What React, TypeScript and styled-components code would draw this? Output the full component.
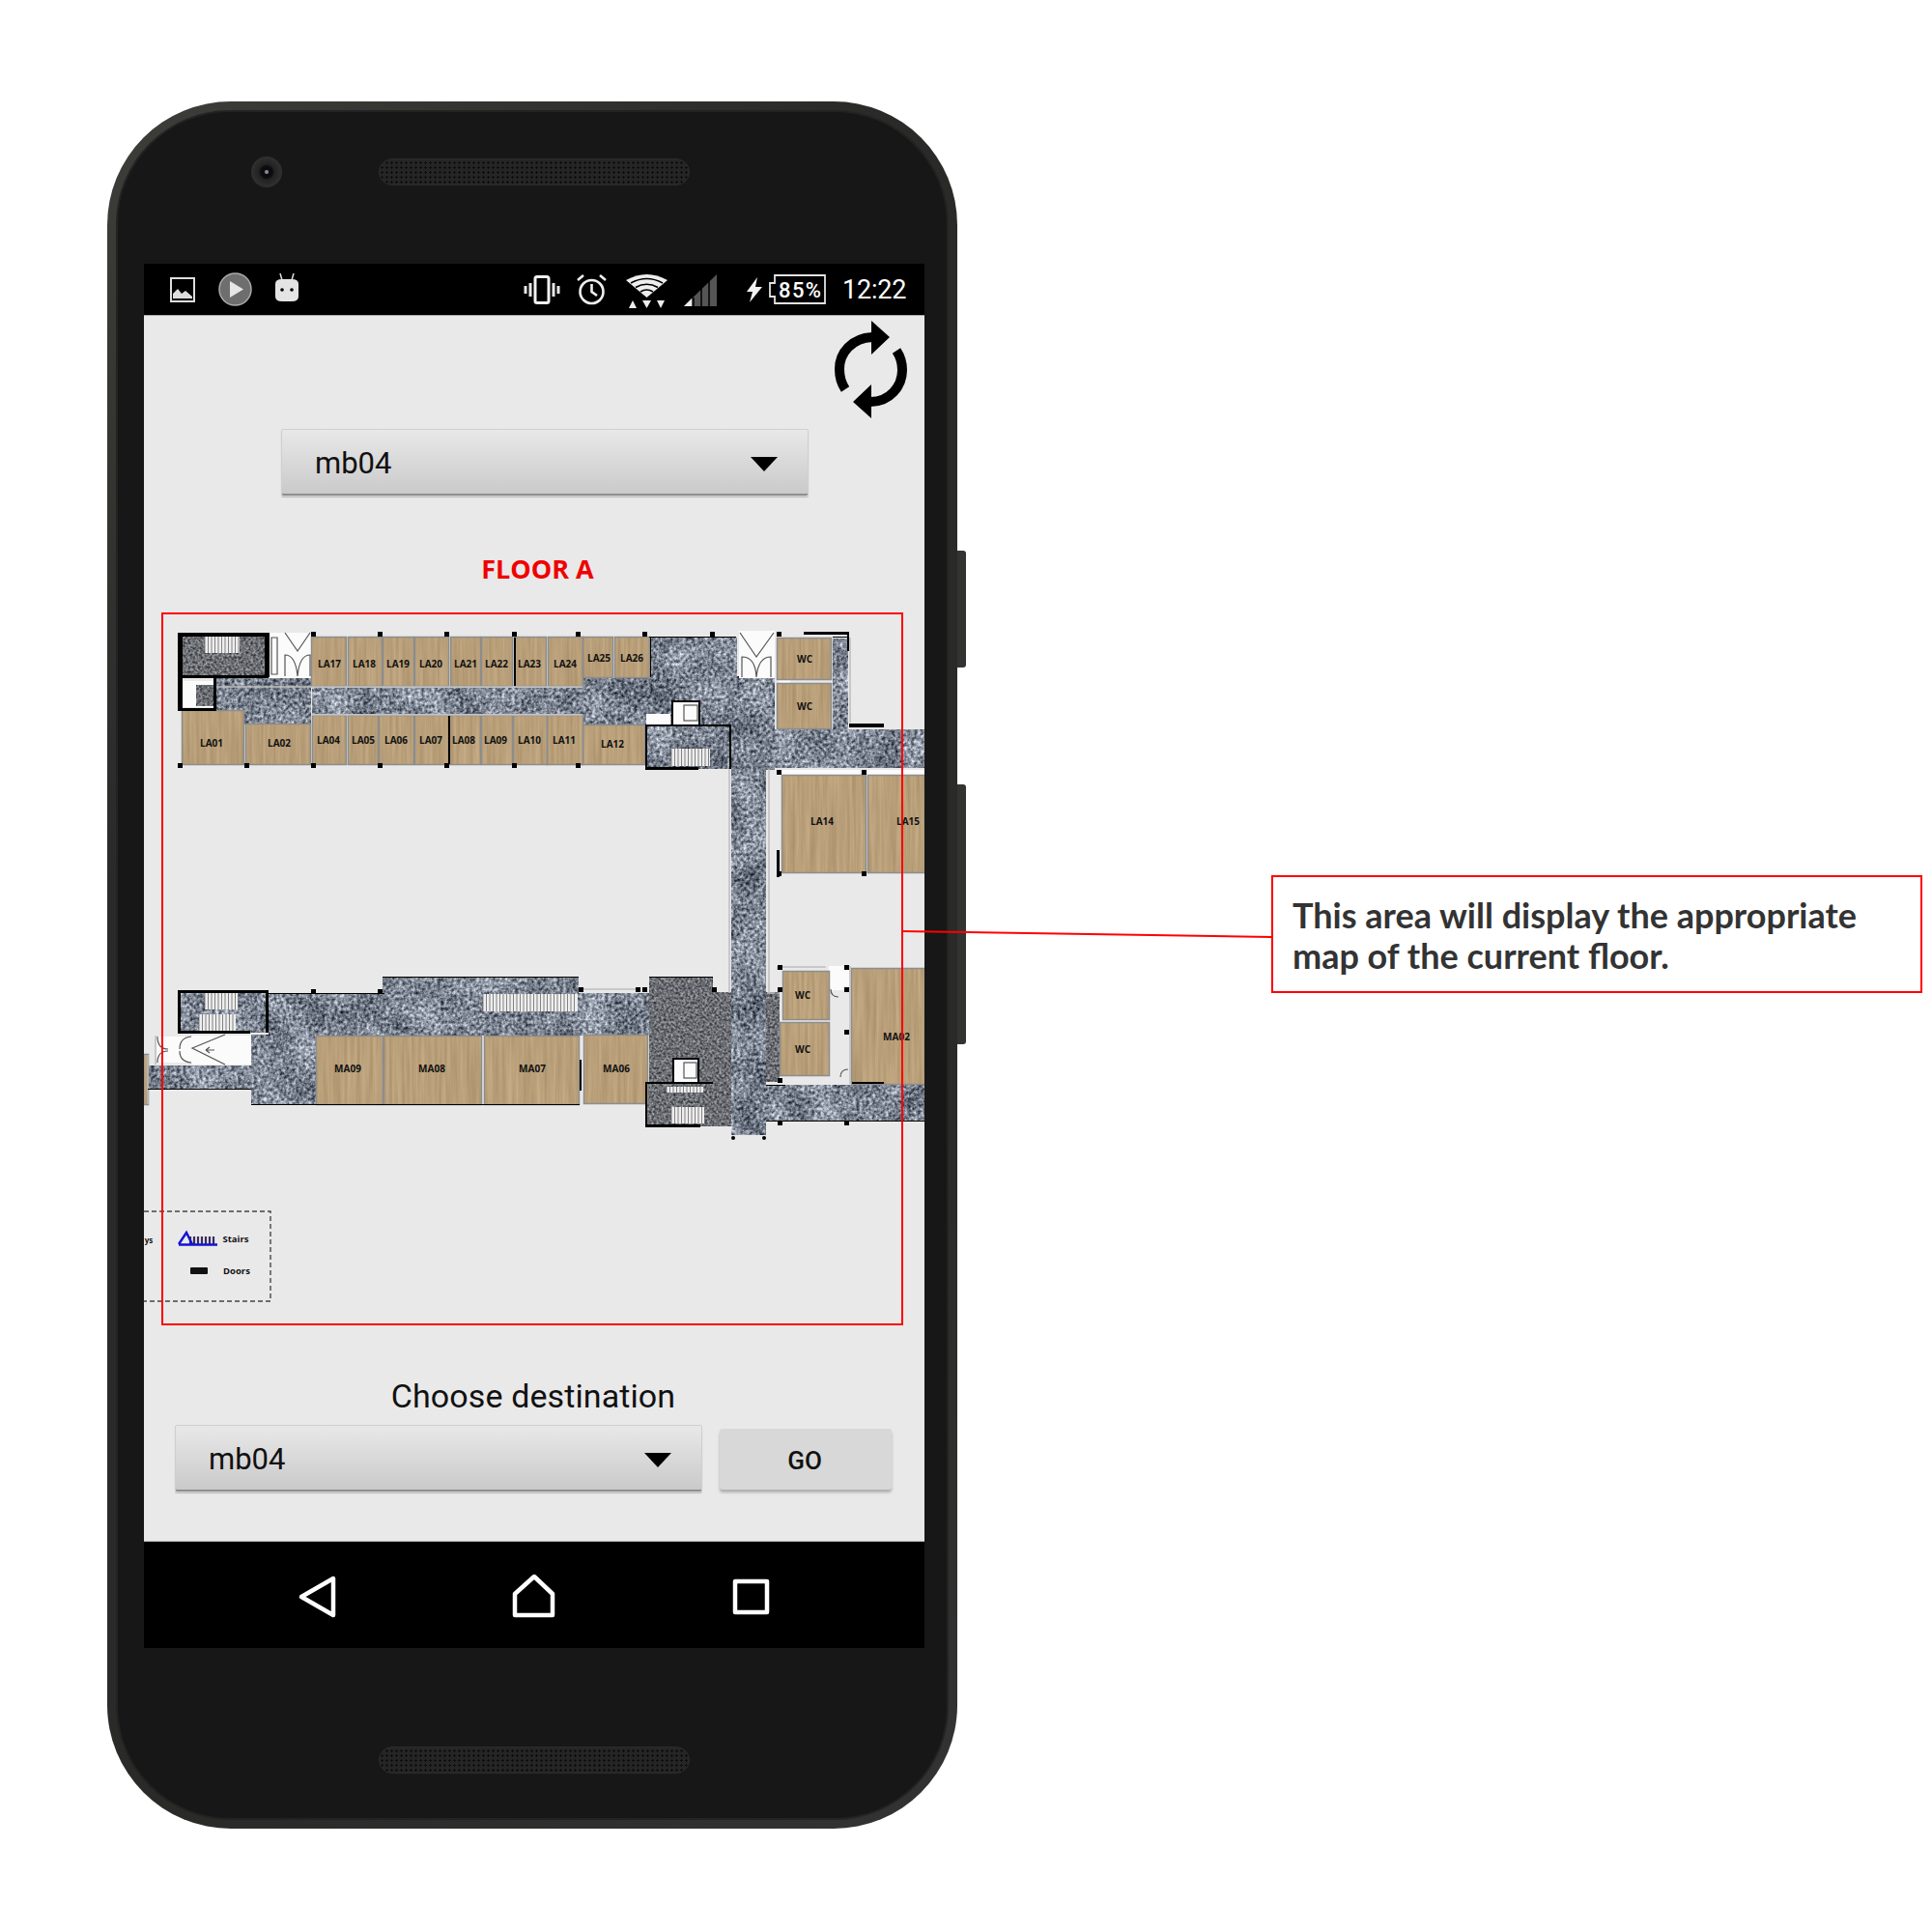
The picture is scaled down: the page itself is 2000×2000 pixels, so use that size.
import React from 'react';
import styled, { createGlobalStyle } from 'styled-components';

const GlobalStyle = createGlobalStyle`
	html, body {
		margin: 0;
		padding: 0;
		background: #fff;
	}
`;

const Page = styled.div`
	position: relative;
	display: flex;
	align-items: flex-start;
	width: 2000px;
	height: 2000px;
	overflow: hidden;
	font-family: Roboto, 'Liberation Sans', sans-serif;
`;

const Phone = styled.div`
	position: relative;
	flex: none;
	display: flex;
	flex-direction: column;
	box-sizing: border-box;
	width: 880px;
	height: 1788px;
	margin: 105px 0 0 111px;
	padding: 0 34px 0 38px;
	border-radius: 128px;
	background: linear-gradient(135deg, #3d3d3a, #2a2a28 30%, #2a2a28 70%, #333);

	&::before {
		content: '';
		position: absolute;
		inset: 11px;
		border-radius: 116px;
		background: #171717;
		box-shadow: 0 0 0 2px #232323;
	}
`;

const SideKey = styled.div<{ $top: number; $height: number }>`
	position: absolute;
	right: -9px;
	top: ${p => p.$top}px;
	width: 9px;
	height: ${p => p.$height}px;
	border-radius: 0 3px 3px 0;
	background: #333331;
`;

const TopBezel = styled.div`
	position: relative;
	display: flex;
	align-items: center;
	box-sizing: border-box;
	height: 168px;
	padding: 57px 0 79px 111px;
`;

const Camera = styled.div`
	width: 32px;
	height: 32px;
	border-radius: 50%;
	background: radial-gradient(circle, #8a8a8a 0 1.5px, #0c0c10 2.5px 6px, #222 8px, #2f2f2e 15px);
`;

const Speaker = styled.div<{ $left: number }>`
	position: relative;
	box-sizing: border-box;
	width: 322px;
	height: 28px;
	margin-left: ${p => p.$left}px;
	border-radius: 14px;
	border: 1px solid #2c2c2c;
	background: radial-gradient(circle, #0e0e0e 1px, transparent 1.4px) 0 1px / 5px 5px, #252525;
`;

const Screen = styled.div`
	position: relative;
	display: flex;
	flex-direction: column;
	width: 808px;
	height: 1433px;
	overflow: hidden;
	background: #e9e9e9;
`;

const StatusBar = styled.div`
	display: flex;
	align-items: center;
	flex: none;
	height: 53px;
	padding-left: 27px;
	background: #000;
	border-bottom: 1px solid #aaa;
`;

const StatusIcon = styled.svg<{ $left: number; $nudge?: number }>`
	display: block;
	flex: none;
	margin-left: ${p => p.$left}px;
	margin-top: ${p => p.$nudge ?? 0}px;
`;

const Clock = styled.span`
	margin-left: 17px;
	color: #fff;
	font-size: 27px;
	line-height: 30px;
	letter-spacing: -0.2px;
`;

const Content = styled.div`
	flex: 1;
	display: flex;
	flex-direction: column;
`;

const RefreshRow = styled.div`
	display: flex;
	justify-content: flex-end;
	height: 117px;
	padding: 5px 16px 0 0;
	box-sizing: border-box;
`;

const Spinner = styled.div<{ $left: number }>`
	display: flex;
	flex: none;
	align-items: center;
	justify-content: space-between;
	box-sizing: border-box;
	width: 546px;
	height: 70px;
	margin-left: ${p => p.$left}px;
	padding: 0 31px 0 34px;
	border: 1px solid #cfcfcf;
	border-radius: 2px;
	background: linear-gradient(#e8e8e8, #c9c9c9);
	box-shadow: inset 0 -2px 0 #8f8f8f, 0 1px 1px #bbb;
	color: #111;
	font-size: 31px;
`;

const Caret = styled.div`
	width: 0;
	height: 0;
	margin-top: 2px;
	border-left: 14px solid transparent;
	border-right: 14px solid transparent;
	border-top: 15px solid #000;
`;

const FloorTitle = styled.div`
	margin-top: 57px;
	height: 36px;
	padding-left: 7px;
	color: #f00000;
	font-family: 'Open Sans', sans-serif;
	font-size: 27px;
	font-weight: 700;
	line-height: 36px;
	text-align: center;
`;

const MapArea = styled.div`
	position: relative;
	height: 806px;
`;

const MapSvg = styled.svg`
	display: block;
`;

const MapFrame = styled.div`
	position: absolute;
	left: 18px;
	top: 27px;
	box-sizing: border-box;
	width: 768px;
	height: 738px;
	border: 2px solid #f00;
`;

const RoomLabel = styled.text<{ $size?: number }>`
	font-family: 'Open Sans', sans-serif;
	font-size: ${p => p.$size ?? 10}px;
	font-weight: 700;
	fill: #111;
	text-anchor: middle;
	dominant-baseline: central;
`;

const DestTitle = styled.div`
	margin-top: 12px;
	height: 40px;
	padding-right: 2px;
	color: #111;
	font-size: 34px;
	letter-spacing: 0.1px;
	line-height: 40px;
	text-align: center;
`;

const DestRow = styled.div`
	display: flex;
	align-items: center;
	margin-top: 10px;
`;

const GoButton = styled.button`
	width: 178px;
	height: 63px;
	margin-left: 18px;
	padding: 3px 2px 0 0;
	border: 0;
	border-radius: 3px;
	background: #d7d8d7;
	box-shadow: 0 3px 3px rgba(0, 0, 0, 0.25);
	color: #111;
	font-family: Roboto, sans-serif;
	font-size: 26px;
	font-weight: 500;
`;

const NavBar = styled.div`
	position: relative;
	flex: none;
	height: 111px;
	background: #000;
	border-top: 1px solid #bbb;
	box-sizing: border-box;
`;

const NavIcons = styled.svg`
	display: block;
`;

const BottomBezel = styled.div`
	position: relative;
	padding: 102px 0 0 243px;
`;

const Callout = styled.div`
	flex: none;
	box-sizing: border-box;
	width: 674px;
	height: 122px;
	margin: 906px 0 0 325px;
	padding: 18px 0 0 20px;
	border: 2px solid #f00;
	color: #333;
	font-family: Lato, sans-serif;
	font-size: 36px;
	font-weight: 700;
	line-height: 42px;
`;

const Connector = styled.svg`
	position: absolute;
	left: 0;
	top: 0;
`;

type Room = [string, number, number, number, number, number, number];

const rooms: Room[] = [
	['LA01', 189, 736, 63, 55, 219, 769],
	['LA02', 255, 750, 66, 41, 289, 769],
	['LA17', 323, 660, 35, 50, 341, 687],
	['LA18', 361, 660, 34, 50, 377, 687],
	['LA19', 397, 660, 31, 50, 412, 687],
	['LA20', 430, 660, 34, 50, 446, 687],
	['LA21', 467, 660, 30, 50, 482, 687],
	['LA22', 499, 660, 31, 50, 514, 687],
	['LA23', 533, 660, 32, 50, 548, 687],
	['LA24', 568, 660, 35, 50, 585, 687],
	['LA25', 604, 660, 30, 41, 620, 681],
	['LA26', 637, 660, 35, 41, 654, 681],
	['LA04', 324, 741, 34, 50, 340, 766],
	['LA05', 361, 741, 30, 50, 376, 766],
	['LA06', 393, 741, 35, 50, 410, 766],
	['LA07', 430, 741, 34, 50, 446, 766],
	['LA08', 466, 741, 31, 50, 480, 766],
	['LA09', 499, 741, 31, 50, 513, 766],
	['LA10', 532, 741, 34, 50, 548, 766],
	['LA11', 567, 741, 36, 50, 584, 766],
	['LA12', 604, 751, 63, 40, 634, 770],
	['WC', 805, 661, 55, 42, 833, 682],
	['WC', 805, 708, 55, 46, 833, 731],
	['LA14', 810, 803, 86, 100, 851, 850],
	['LA15', 899, 803, 58, 100, 940, 850],
	['MA09', 328, 1073, 68, 70, 360, 1106],
	['MA08', 398, 1073, 100, 70, 447, 1106],
	['MA07', 502, 1073, 97, 70, 551, 1106],
	['MA06', 605, 1072, 65, 70, 638, 1106],
	['WC', 811, 1006, 47, 49, 831, 1030],
	['WC', 808, 1059, 50, 54, 831, 1086],
	['MA02', 882, 1003, 75, 119, 928, 1073],
	['', 149, 1092, 4, 51, 0, 0],
];

// [x, y, w, h]
const stone = [
	[323, 712, 280, 27],
	[223, 702, 99, 48],
	[603, 702, 160, 48],
	[673, 660, 90, 45],
	[757, 700, 36, 475],
	[763, 702, 39, 95],
	[802, 755, 155, 40],
	[862, 661, 16, 94],
	[668, 751, 89, 45],
	[278, 1029, 120, 43],
	[396, 1012, 203, 60],
	[599, 1028, 73, 44],
	[260, 1071, 68, 72],
	[153, 1103, 107, 24],
	[793, 1123, 164, 37],
	[184, 1025, 94, 44],
];

const darkStone = [
	[184, 655, 94, 46],
	[672, 1011, 66, 110],
	[735, 1027, 72, 93],
	[668, 1120, 89, 46],
];

const pillars = [
	[322, 654], [391, 654], [460, 654], [530, 654], [596, 654], [665, 654], [735, 654], [804, 654],
	[184, 790], [253, 790], [322, 790], [391, 790], [460, 790], [530, 790], [596, 790],
	[804, 797], [892, 797], [804, 902], [892, 902],
	[805, 999], [874, 999], [805, 1022], [874, 1022], [874, 1066], [805, 1116], [805, 1160], [874, 1160],
	[599, 1022], [658, 1022], [665, 1022], [737, 1022],
	[322, 1024], [391, 1024],
];

const walls = [
	[184, 655, 94, 4], [184, 655, 5, 80], [274, 655, 5, 46], [184, 699, 94, 3], [184, 733, 39, 3],
	[221, 702, 3, 34], [532, 660, 2, 50], [464, 741, 2, 50],
	[832, 654, 47, 3], [877, 654, 2, 20], [879, 749, 36, 4],
	[668, 750, 89, 2], [668, 751, 2, 45], [755, 750, 2, 46], [668, 794, 55, 3],
	[804, 880, 3, 28],
	[184, 1025, 94, 3], [184, 1025, 3, 44], [275, 1025, 3, 44], [184, 1067, 75, 3],
	[668, 1120, 70, 2], [668, 1120, 2, 46], [668, 1164, 57, 3], [600, 1097, 2, 32],
	[696, 1095, 28, 2], [696, 1095, 2, 25], [722, 1095, 2, 25],
	[695, 725, 30, 2], [695, 725, 2, 25], [723, 725, 2, 25],
	[882, 1120, 33, 2],
	[153, 1127, 107, 1], [260, 1143, 340, 1], [793, 1160, 164, 1], [793, 1123, 20, 1],
	[396, 1011, 203, 1], [672, 1011, 66, 1], [278, 1028, 120, 1],
	[672, 659, 90, 1], [673, 659, 1, 42], [862, 659, 16, 1],
];

const white = [
	[189, 705, 33, 27],
	[208, 736, 14, 14],
	[695, 727, 30, 23],
	[669, 739, 25, 11],
	[765, 653, 37, 49],
	[806, 704, 12, 14],
	[279, 655, 43, 47],
	[696, 1097, 28, 23],
	[199, 1072, 61, 30],
	[162, 1073, 37, 27],
	[858, 1000, 22, 25],
	[805, 797, 85, 6],
	[892, 797, 65, 6],
];

// thin grey outlines that run along the outer walls
const outlines = [
	'M755 796 V1028 M796 796 V1028',
	'M880 660 V748',
	'M223 711 H603 M323 740 H603',
	'M855 1001 H805 V1004 M880 1000 V1122',
	'M802 1028 H794 M600 1024 H658',
	'M153 1092 V1143 M161 1072 V1102',
];

function Stairs({ x, y, w, h }: { x: number; y: number; w: number; h: number }) {
	const treads = [];
	for (let i = x; i < x + w; i += 3.5) {
		treads.push(<line key={i} x1={i} y1={y} x2={i} y2={y + h} stroke="#666" strokeWidth={0.8} />);
	}
	return (
		<g>
			<rect x={x} y={y} width={w} height={h} fill="#eee" />
			{treads}
		</g>
	);
}

function FloorPlan() {
	return (
		<MapSvg width={808} height={806} viewBox="149 607 808 806">
			<defs>
				<filter id="stone" x="0" y="0" width="100%" height="100%" colorInterpolationFilters="sRGB">
					<feTurbulence type="fractalNoise" baseFrequency="0.3" numOctaves={3} seed={4} />
					<feColorMatrix type="matrix" values="1 0 0 0 0  1 0 0 0 0  1 0 0 0 0  0 0 0 0 1" result="fine" />
					<feTurbulence type="fractalNoise" baseFrequency="0.03" numOctaves={2} seed={9} />
					<feColorMatrix type="matrix" values="1 0 0 0 0  1 0 0 0 0  1 0 0 0 0  0 0 0 0 1" result="blot" />
					<feComposite in="fine" in2="blot" operator="arithmetic" k1={0} k2={0.85} k3={0.35} k4={-0.1} />
					<feColorMatrix type="matrix" values="1.2 0 0 0 -0.11  1.2 0 0 0 -0.08  1.2 0 0 0 -0.03  0 0 0 0 1" />
					<feComposite in2="SourceAlpha" operator="in" />
				</filter>
				<filter id="stoneDark" x="0" y="0" width="100%" height="100%" colorInterpolationFilters="sRGB">
					<feTurbulence type="fractalNoise" baseFrequency="0.4" numOctaves={2} seed={7} />
					<feColorMatrix type="matrix" values="0.8 0 0 0 0.02  0.8 0 0 0 0.03  0.8 0 0 0 0.05  0 0 0 0 1" />
					<feComposite in2="SourceAlpha" operator="in" />
				</filter>
				<filter id="wood" x="0" y="0" width="100%" height="100%" colorInterpolationFilters="sRGB">
					<feTurbulence type="fractalNoise" baseFrequency="0.3 0.012" numOctaves={3} seed={3} />
					<feColorMatrix type="matrix" values="0.15 0 0 0 0.65  0.15 0 0 0 0.55  0.15 0 0 0 0.4  0 0 0 0 1" />
					<feComposite in2="SourceAlpha" operator="in" />
				</filter>
			</defs>

			<g filter="url(#stoneDark)">
				{darkStone.map(([x, y, w, h]) => (
					<rect key={`${x}-${y}`} x={x} y={y} width={w} height={h} />
				))}
			</g>
			<g filter="url(#stone)">
				{stone.map(([x, y, w, h]) => (
					<rect key={`${x}-${y}`} x={x} y={y} width={w} height={h} />
				))}
			</g>
			{white.map(([x, y, w, h]) => (
				<rect key={`${x}-${y}`} x={x} y={y} width={w} height={h} fill="#fbfbfb" />
			))}
			{/* lift car floor, sits on the white shaft */}
			<rect x={203} y={709} width={18} height={22} filter="url(#stoneDark)" />

			<g filter="url(#wood)">
				{rooms.map(([, x, y, w, h]) => (
					<rect key={`${x}-${y}`} x={x} y={y} width={w} height={h} />
				))}
			</g>
			{rooms.map(([, x, y, w, h]) => (
				<rect
					key={`${x}-${y}`}
					x={x - 0.5}
					y={y - 0.5}
					width={w + 1}
					height={h + 1}
					fill="none"
					stroke="#8d8d8d"
					strokeWidth={1.5}
				/>
			))}
			<g fill="none" stroke="#bdbdbd" strokeWidth={1.5}>
				{outlines.map(d => (
					<path key={d} d={d} />
				))}
			</g>

			<Stairs x={212} y={657} w={36} h={19} />
			<Stairs x={695} y={775} w={40} h={18} />
			<Stairs x={500} y={1029} w={98} h={18} />
			<Stairs x={212} y={1028} w={34} h={17} />
			<Stairs x={206} y={1050} w={38} h={17} />
			<Stairs x={695} y={1146} w={34} h={17} />
			<Stairs x={690} y={1125} w={38} h={6} />

			{/* lift cars and door swings */}
			<g fill="none" stroke="#555" strokeWidth={1.2}>
				<rect x={708} y={730} width={14} height={16} />
				<rect x={708} y={1100} width={13} height={16} />
				<path d="M766 655 L783 680 L801 655 M768 701 V680 Q782 680 783 701 Q785 680 798 680 V701" />
				<path d="M295 655 L308 674 L321 655 M295 700 V678 Q306 678 308 700 Q310 678 321 678 V700" />
				<path d="M281 660 H287 V698 H281 Z" />
				<path d="M233 1071 L199 1085 L233 1102" />
				<path d="M163 1073 Q163 1086 174 1086 M198 1073 Q186 1074 186 1086 M163 1100 Q163 1088 174 1088 M198 1100 Q186 1099 186 1088" />
				<path d="M213 1087 H222 M213 1087 l4 -3 M213 1087 l4 3" />
				<path d="M868 1032 q-8 0 -8 -8 M870 1115 q0 -8 8 -8" />
			</g>

			<g fill="#000">
				{walls.map(([x, y, w, h]) => (
					<rect key={`${x}-${y}-${w}`} x={x} y={y} width={w} height={h} />
				))}
				{pillars.map(([x, y]) => (
					<rect key={`${x}-${y}`} x={x} y={y} width={5} height={5} />
				))}
				<circle cx={759} cy={1178} r={2} />
				<circle cx={791} cy={1178} r={2} />
			</g>

			{rooms.map(([label, , , , , lx, ly]) =>
				label ? (
					<RoomLabel key={`${label}-${ly}`} x={lx} y={ly}>
						{label}
					</RoomLabel>
				) : null,
			)}

			{/* legend */}
			<path d="M149 1254 H280 V1347 H149" fill="none" stroke="#444" strokeWidth={1.4} strokeDasharray="5 3" />
			<RoomLabel x={154} y={1283} $size={8}>ys</RoomLabel>
			<path
				d="M197 1280 V1288 M201 1280 V1288 M205 1280 V1288 M209 1280 V1288 M213 1280 V1288 M217 1280 V1288 M221 1280 V1288"
				stroke="#3a2a60"
				strokeWidth={2.2}
			/>
			<path d="M185 1288 L193 1276 L199 1288 M185 1288.5 H225" fill="none" stroke="#1414d2" strokeWidth={2.4} />
			<rect x={197} y={1312} width={18} height={7} rx={1} fill="#111" />
			<RoomLabel x={244} y={1282} $size={9.5}>Stairs</RoomLabel>
			<RoomLabel x={245} y={1315} $size={9.5}>Doors</RoomLabel>
		</MapSvg>
	);
}

function StatusIcons() {
	return (
		<>
			<StatusIcon $left={0} width={26} height={26} viewBox="0 0 26 26">
				<rect x={1} y={1} width={24} height={24} fill="none" stroke="#ddd" strokeWidth={2} />
				<path d="M3 22 V17 L8 12 L12 17 L16 14 L23 20 V22 Z" fill="#ddd" />
			</StatusIcon>
			<StatusIcon $left={24} width={35} height={35} viewBox="0 0 35 35">
				<circle cx={17.5} cy={17.5} r={16.5} fill="#6e6e6e" stroke="#aaa" strokeWidth={1.5} />
				<path d="M12 9 L26 17.5 L12 26 Z" fill="#e6e6e6" />
			</StatusIcon>
			<StatusIcon $left={23} $nudge={-3} width={26} height={30} viewBox="0 0 26 30">
				<path d="M6 0 L8 7 M20 0 L18 7" stroke="#ddd" strokeWidth={1.5} />
				<path d="M1 11 Q1 6 8 6 H18 Q25 6 25 11 V24 Q25 29 18 29 H8 Q1 29 1 24 Z" fill="#e4e4e4" />
				<circle cx={8} cy={17} r={1.8} fill="#000" />
				<circle cx={18} cy={17} r={1.8} fill="#000" />
			</StatusIcon>
			<StatusIcon $left={231} width={40} height={30} viewBox="0 0 40 30">
				<rect x={13} y={1.5} width={14} height={27} rx={2} fill="none" stroke="#f2f2f2" strokeWidth={3} />
				<path d="M8 8 V22 M3 11 V19 M32 8 V22 M37 11 V19" stroke="#e6e6e6" strokeWidth={3} />
			</StatusIcon>
			<StatusIcon $left={16} width={31} height={32} viewBox="0 0 31 32">
				<circle cx={15.5} cy={18} r={12} fill="none" stroke="#eee" strokeWidth={2.6} />
				<path d="M15.5 10 V18 L21 22 M1 6 L7 1 M30 6 L24 1" fill="none" stroke="#eee" strokeWidth={2.6} />
			</StatusIcon>
			<StatusIcon $left={20} $nudge={4} width={43} height={35} viewBox="0 0 43 35">
				<path d="M21.5 24 L0 6 Q21.5 -6 43 6 Z" fill="#eee" />
				<path d="M5 9 Q21.5 0 38 9 M10 13.5 Q21.5 7 33 13.5 M15 18 Q21.5 14 28 18" fill="none" stroke="#000" strokeWidth={1.6} />
				<path d="M3 35 L7 27 L11 35 Z M17 27 H26 L21.5 35 Z M32 27 H40 L36 35 Z" fill="#eee" />
			</StatusIcon>
			<StatusIcon $left={17} $nudge={2} width={34} height={33} viewBox="0 0 34 33">
				<path d="M34 0 V33 H0 Z" fill="#555" />
				<path d="M8 25 V33 H0 Z" fill="#eee" />
				<path d="M10 24 V33 M18 15 V33 M26 7 V33" stroke="#000" strokeWidth={1.5} />
			</StatusIcon>
			<StatusIcon $left={31} width={16} height={26} viewBox="0 0 16 26">
				<path d="M11 0 L0 15 H6 L3 26 L16 10 H9 Z" fill="#f2f2f2" />
			</StatusIcon>
			<StatusIcon $left={6} width={60} height={31} viewBox="0 0 60 31">
				<path d="M7 1 H59 V30 H7 V23 H2 V9 H7 Z" fill="none" stroke="#e2e2e2" strokeWidth={1.8} />
				<text x={33} y={24} fill="#fff" fontFamily="Roboto, sans-serif" fontSize={22} fontWeight={500} textAnchor="middle" textLength={44}>
					85%
				</text>
			</StatusIcon>
			<Clock>12:22</Clock>
		</>
	);
}

export default function App() {
	return (
		<Page>
			<GlobalStyle />
			<Phone>
				<SideKey $top={465} $height={121} />
				<SideKey $top={707} $height={269} />
				<TopBezel>
					<Camera />
					<Speaker $left={100} />
				</TopBezel>
				<Screen>
					<StatusBar>
						<StatusIcons />
					</StatusBar>
					<Content>
						<RefreshRow>
							<svg width={78} height={102} viewBox="862 332 78 102">
								<g fill="none" stroke="#000" strokeWidth={10}>
									<path d="M902 349 C881 350 868 365 868 382 C868 390 870 397 874 403" />
									<path d="M900 416 C920 416 933 400 933 383 C933 376 931 369 927 363" />
								</g>
								<path d="M901 332 L920 349 L901 367 Z M901 398 L882 416 L901 433 Z" fill="#000" />
							</svg>
						</RefreshRow>
						<Spinner $left={142}>
							mb04
							<Caret />
						</Spinner>
						<FloorTitle>FLOOR A</FloorTitle>
						<MapArea>
							<FloorPlan />
							<MapFrame />
						</MapArea>
						<DestTitle>Choose destination</DestTitle>
						<DestRow>
							<Spinner $left={32}>
								mb04
								<Caret />
							</Spinner>
							<GoButton>GO</GoButton>
						</DestRow>
					</Content>
					<NavBar>
						<NavIcons width={808} height={110} viewBox="149 1596 808 110">
							<g fill="none" stroke="#fff" strokeWidth={4.5} strokeLinejoin="round">
								<path d="M345 1634 V1672 L312 1653 Z" />
								<path d="M533 1672 V1650 L553 1632 L572 1650 V1672 Z" />
								<rect x={761} y={1637} width={33} height={32} />
							</g>
						</NavIcons>
					</NavBar>
				</Screen>
				<BottomBezel>
					<Speaker $left={0} />
				</BottomBezel>
			</Phone>
			<Callout>
				This area will display the appropriate
				<br />
				map of the current floor.
			</Callout>
			<Connector width={2000} height={2000}>
				<line x1={934} y1={964} x2={1316} y2={970} stroke="#f00" strokeWidth={2} />
			</Connector>
		</Page>
	);
}
